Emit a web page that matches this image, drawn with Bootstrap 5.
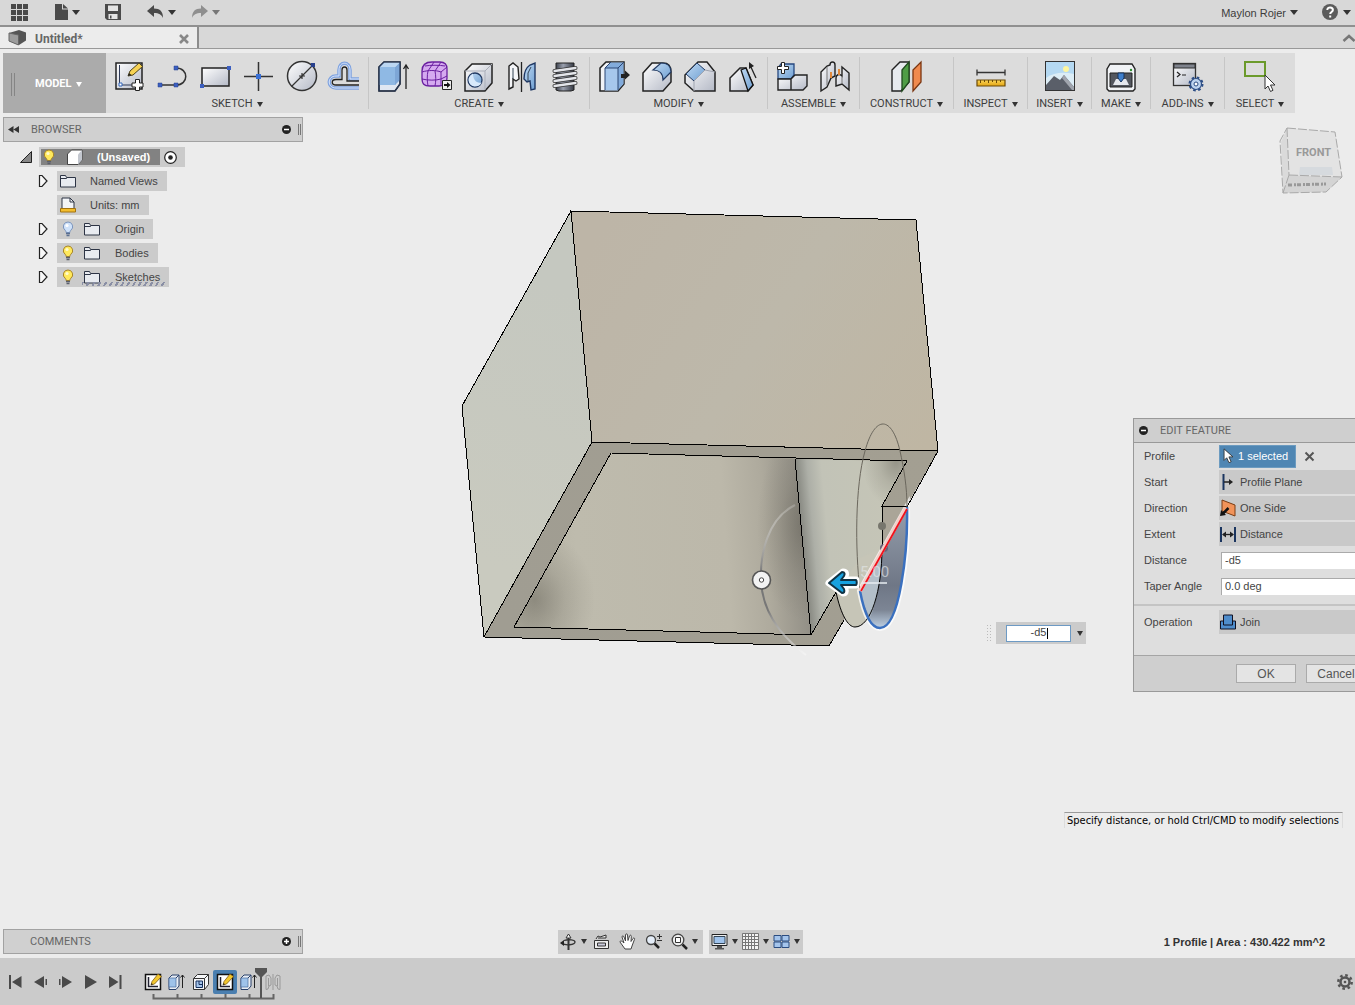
<!DOCTYPE html>
<html lang="en">
<head>
<meta charset="utf-8">
<meta name="viewport" content="width=device-width, initial-scale=1">
<title>Untitled*</title>
<link rel="stylesheet" href="https://cdn.jsdelivr.net/npm/bootstrap@5.3.0/dist/css/bootstrap.min.css">
<style>
body{background:#ececec;color:#444;font:11px/16px "Liberation Sans",Arial,sans-serif;overflow:hidden}
button,input,select{font:inherit;color:inherit;margin:0}
.ib{background:none;border:0;padding:0;display:inline-flex;align-items:center;justify-content:center;color:#3c3c3c}
svg{display:block;flex:none;overflow:visible}
.caps{font:11px/16px Roboto,"Liberation Sans",sans-serif}
.tri{width:0;height:0;border:4px solid transparent;border-top:5px solid #333;border-bottom:0;flex:none}
.tri-sm{border-width:5px 3px 0}
.tri-dim{border-top-color:#777}
.appbar{height:27px;background:#d8d8d8;border-bottom:2px solid #909090;padding-left:10px}
.appbar .gap-l{margin-left:25px}
.appbar .gap-s{margin-left:15px}
.tabs{height:22px;background:#d8d8d8;border-bottom:1px solid #999}
.doctab{width:199px;background:#ececec;border-right:2px solid #8c8c8c;padding:2px 8px 0 9px}
.doctab a{font:bold 12px/16px Roboto,"Liberation Sans",sans-serif;color:#666;margin-left:9px}
.ribbon{margin:4px 0 0 3px;height:60px;background:#dcdcdc}
.model{width:103px;background:#ababab;color:#fff;padding:2px 0 0 8px}
.model .grip{width:4px;height:23px;border:solid #858585;border-width:0 1px;margin-right:20px}
.model .tri{border-top-color:#fff}
.grp{margin:4px 0;height:52px;padding-top:2px;border-right:1px solid #c6c6c6}
.grp:last-child{border:0}
.grp .tool{width:43px;height:36px}
.grp>.ib:last-child{line-height:18px}
.w1{width:263px}.w2{width:221px}.w3{width:178px}.w4{width:92px}.w5{width:94px}.w6{width:74px}.w7{width:64px}.w8{width:59px}.w9{width:70px}
.work{min-height:0}
.scene{position:absolute;inset:0;width:100%;height:100%}
.browser{margin:4px 0 0 3px}
.bar{width:300px;height:25px;background:#d0d0d0;border:1px solid #a2a2a2;color:#666;padding:0 1px 0 4px}
.bar .endgrip{width:3px;height:11px;border:solid #777;border-width:0 1px;margin-left:7px}
.bar .solo{margin-left:22px}
.tree{margin:5px 0 0 17px;padding:0;list-style:none}
.tree li{height:20px;margin-bottom:4px;display:flex;align-items:center}
.tree .kid{padding-left:18px}
.tree .tog{width:10px;margin-right:9px}
.chip{height:20px;background:#cbcbcb;display:flex;align-items:center;padding:0 9px 0 3px;color:#444}
.chip .two{margin-left:8px}
.chip .t1{margin-left:14px}.chip .t2{margin-left:15px}
.rootchip{margin-left:7px;padding:0 8px 0 2px}
.rootsel{height:16px;background:#828282;color:#fff;font-weight:bold;padding:0 10px 0 0;display:flex;align-items:center}
.edited{position:relative}
.edited:after{content:"";position:absolute;left:25px;right:2px;bottom:1px;height:4px;background:repeating-linear-gradient(120deg,#8a8fa5 0 2px,transparent 2px 5px)}
.cube{position:absolute;right:12px;top:13px}
.dlg{position:absolute;right:0;top:305px;width:222px;background:#dedede;border:1px solid #999;border-right:0;overflow:hidden}
.dlg header{height:24px;background:#cfcfcf;border-bottom:1px solid #999;padding-left:5px;color:#666}
.frow{height:26px;display:flex;align-items:center;padding-left:10px}
.frow label,.frow .flab{width:75px;flex:none}
.pick{width:77px;height:23px;background:#4f86b3;border:1px solid #6c9bc0;color:#fff;padding:0 3px}
.selw{flex:1;height:24px;background:#c9c9c9;display:flex;align-items:center;min-width:0}
.selw select{appearance:none;background:none;border:0;padding:0 0 0 3px;flex:1;min-width:0;outline:0}
.inp{flex:1;min-width:0;height:17px;border:1px solid #aaa;border-width:1px 0 0 1px;background:#fff;padding:0 3px 2px;margin-left:2px;border-radius:0}
.rule{height:2px;background:#c4c4c4;margin:5px 0 3px}
.dlg footer{height:36px;background:#cfcfcf;border-top:1px solid #a5a5a5;margin-top:20px;padding-left:102px;display:flex;align-items:center;gap:10px}
.dlg footer button{flex:none;width:60px;height:19px;font-size:12px;line-height:16px;background:#e4e4e4;border:1px solid #aaa;padding:0;color:#555}
.hud{position:absolute;right:269px;top:509px;height:22px;background:#cbcbcb;padding:0 3px 0 10px;display:flex;align-items:center;gap:6px}
.hud .wrapin{position:relative}
.hud input{width:65px;height:17px;border:1px solid #6d9ac4;background:#fff;text-align:center;padding:0 0 2px;border-radius:0;display:block;outline:0}
.hud .cursor{position:absolute;left:41px;top:3px;width:1px;height:11px;background:#000}
.hud .dots{position:absolute;left:-10px;top:2px;width:5px;height:19px;background:radial-gradient(circle,#bbb 1px,transparent 1px) 0 0/3px 3px}
.hint{position:absolute;right:12px;top:699px;border:1px solid #dcdcdc;border-top-color:#999;border-bottom:0;padding:0 3px 0 2px;color:#000;font:11px/15px "DejaVu Sans Condensed","Open Sans",sans-serif;white-space:nowrap}
.foot{display:grid;grid-template-columns:1fr auto 1fr;padding:0 0 4px 3px;align-items:center}
.foot .views{margin-left:2px;gap:6px}
.navb{height:24px;background:#cbcbcb;display:flex;align-items:center}
.nav1{width:145px}.nav2{width:94px}
.navb .ib{height:24px;width:26px;flex:none}
.navb .dd{width:31px}
.navb .ddw{width:36px}
.status{font-weight:bold;color:#333;padding-right:30px;text-align:right}
.timeline{height:47px;background:#cbcbcb;padding-left:3px}
.timeline .play{width:25px;height:47px}
.feats{margin-left:13px;height:47px;position:relative;padding-top:12px}
.feats .ib{width:24px;height:24px}
.feats .on{background:#4a7fb0;border-radius:2px}
.feats .marks{position:absolute;left:0;top:0}
.gear{margin-right:2px}
</style>
<script src="https://cdn.jsdelivr.net/npm/bootstrap@5.3.0/dist/js/bootstrap.bundle.min.js"></script>
</head>
<body class="vh-100 d-flex flex-column">

<svg width="0" height="0" class="position-absolute" aria-hidden="true">
<defs>
<linearGradient id="gw" x1="0" y1="0" x2="1" y2="1"><stop offset="0" stop-color="#fff"/><stop offset="1" stop-color="#b4b9c6"/></linearGradient>
<linearGradient id="gb" x1="0" y1="0" x2="1" y2="1"><stop offset="0" stop-color="#c0daf3"/><stop offset="1" stop-color="#6f9fd2"/></linearGradient>
<linearGradient id="gs" x1="0" y1="0" x2="1" y2="0"><stop offset="0" stop-color="#3c414c"/><stop offset=".4" stop-color="#9aa0ae"/><stop offset="1" stop-color="#343843"/></linearGradient>
<linearGradient id="gy" x1="0" y1="0" x2="0" y2="1"><stop offset="0" stop-color="#fbd65a"/><stop offset="1" stop-color="#e3a412"/></linearGradient>
<symbol id="bulb" viewBox="0 0 16 16"><path d="M8 1a4.600 4.600 0 0 0-2.800 8.300c.6.6.9 1.300.9 2.200h3.800c0-.9.3-1.600.9-2.200A4.600 4.600 0 0 0 8 1z" fill="#ffe95c" stroke="#a8852a"/><circle cx="7" cy="4.500" r="1.600" fill="#fffbd0"/><path d="M6 12.500h4M6.500 14.500h3" stroke="#5b5f6c" stroke-width="1.500"/></symbol>
<symbol id="bulboff" viewBox="0 0 16 16"><path d="M8 1a4.600 4.600 0 0 0-2.800 8.300c.6.6.9 1.300.9 2.200h3.800c0-.9.3-1.600.9-2.200A4.600 4.600 0 0 0 8 1z" fill="#cfe2fa" stroke="#7c95bd"/><circle cx="7" cy="4.500" r="1.600" fill="#fff"/><path d="M6 12.500h4M6.500 14.500h3" stroke="#5b6f90" stroke-width="1.500"/></symbol>
<symbol id="folder" viewBox="0 0 16 16"><path d="M.5 2.500h5l1 2h9v9.500H.5z" fill="#e8ebf0" stroke="#2d3445"/><path d="M1 5.500h5.500l1-1" fill="none" stroke="#2d3445"/></symbol>
<symbol id="togr" viewBox="0 0 10 14"><path d="M1.500 1.500H4L9 7l-5 5.500H1.500z" fill="#f8f8f8" stroke="#222" stroke-width="1.200"/></symbol>
<symbol id="sk" viewBox="0 0 18 18"><path d="M1.500 1.500h15v15h-15z" fill="#fff" stroke="#111" stroke-width="1.500"/><path d="M4.500 4v9.500H14" fill="none" stroke="#223" stroke-width="1.500"/><path d="M7 12l1-3.500L14 1l3.500 2.500-7 7.500z" fill="#f2c62e" stroke="#7d5a13" stroke-width=".8"/><path d="M7 12l.6-2 1.400 1.200z" fill="#222"/></symbol>
<symbol id="ex" viewBox="0 0 18 18"><path d="M1 5l3-3h7v11l-3 3.500H1z" fill="#e9eef5" stroke="#28406b"/><path d="M1 5h7v9H1z" fill="#9fc3ea" stroke="#4a6a9b" stroke-width=".7"/><path d="M8 5l3-3" stroke="#28406b"/><path d="M14.500 15V2M12.500 4.500l2-2.500 2 2.500" fill="none" stroke="#222"/></symbol>
<symbol id="cur" viewBox="0 0 12 18"><path d="M1 1v13l3-3 2.500 5.500 2.500-1L6.500 10H11z" fill="#fff" stroke="#333"/></symbol>
</defs></svg>

<header class="appbar d-flex align-items-center flex-shrink-0">
  <button class="ib" aria-label="Data panel"><svg width="18" height="18" viewBox="0 0 18 18" fill="#4a4a4a"><path d="M1 0h5v5H1zM7 0h5v5H7zM13 0h5v5h-5zM1 6h5v5H1zM7 6h5v5H7zM13 6h5v5h-5zM1 12h5v5H1zM7 12h5v5H7zM13 12h5v5h-5z"/></svg></button>
  <button class="ib gap-l" aria-label="File"><svg width="15" height="18" viewBox="0 0 15 18"><path d="M2 0h7v5.500h6V16H2z" fill="#4a4a4a"/><path d="M10 0l5 4.500h-5z" fill="#4a4a4a"/></svg><span class="tri ms-1"></span></button>
  <button class="ib gap-l" aria-label="Save"><svg width="17" height="17" viewBox="0 0 17 17"><path d="M0 0h16v16H2l-2-2z" fill="#4a4a4a"/><path d="M3 1.500h10V7H3zM3.500 10h9v5h-9z" fill="#e3e3e3"/><path d="M5 11.500h1.500v3H5z" fill="#4a4a4a"/></svg></button>
  <button class="ib gap-l" aria-label="Undo"><svg width="17" height="16" viewBox="0 0 17 16"><path d="M0 6l7-6v3.500c6 0 9 3 9 9.500-1.500-3.500-4-5-9-5V12z" fill="#4a4a4a"/></svg><span class="tri ms-1"></span></button>
  <button class="ib gap-s" aria-label="Redo"><svg width="17" height="16" viewBox="0 0 17 16"><path d="M17 6l-7-6v3.500c-6 0-9 3-9 9.500 1.500-3.500 4-5 9-5V12z" fill="#8f8f8f"/></svg><span class="tri tri-dim ms-1"></span></button>
  <button class="ib ms-auto">Maylon Rojer<span class="tri ms-1"></span></button>
  <button class="ib ms-4 me-1" aria-label="Help"><svg width="17" height="17" viewBox="0 0 17 17"><circle cx="8" cy="8" r="8" fill="#5c5c5c"/><path d="M5.300 6c0-3.500 5.600-3.300 5.600 0 0 2-2.700 2-2.700 4M8.200 11.500v2" fill="none" stroke="#fff" stroke-width="2"/></svg><span class="tri ms-1"></span></button>
</header>

<nav class="tabs d-flex flex-shrink-0">
  <div class="doctab d-flex align-items-center">
    <svg width="17" height="16" viewBox="0 0 17 16"><path d="M0 2l10-3 7 2.500v8L10 14 0 10z" fill="#555"/><path d="M0 2l9.500 2v10L0 10z" fill="#9c9c9c" stroke="#666"/></svg>
    <a href="#" class="text-decoration-none">Untitled*</a>
    <button class="ib ms-auto" aria-label="Close"><svg width="10" height="10" viewBox="0 0 10 10"><path d="M1 1l8 8M9 1L1 9" stroke="#888" stroke-width="2.600"/></svg></button>
  </div>
  <button class="ib ms-auto" aria-label="Collapse"><svg width="13" height="8" viewBox="0 0 13 8"><path d="M1.500 7L7 2l5.500 5" fill="none" stroke="#777" stroke-width="2.500"/></svg></button>
</nav>

<div class="d-flex flex-shrink-0">
<div class="ribbon d-flex caps">
  <button class="ib model caps fw-bold text-white justify-content-start"><span class="grip"></span>MODEL<span class="tri ms-1 tri-sm"></span></button>

  <div class="grp w1 d-flex flex-column align-items-center">
    <div class="d-flex">
      <button class="ib tool" aria-label="Create sketch"><svg width="36" height="36" viewBox="0 0 36 36"><rect x="4" y="4" width="26" height="26" fill="url(#gw)" stroke="#222" stroke-width="1.500"/><path d="M7.500 6v20H27" fill="none" stroke="#2f3a58"/><path d="M7 24h3v3H7z" fill="#fff" stroke="#3366bb"/><path d="M16 17l2-5L27 4l3.500 3.500L21 16z" fill="#f6d254" stroke="#4e431c"/><path d="M16 17l1-3 2.500 2z" fill="#222"/><path d="M23.500 20.500h4V24H31v4h-3.500v3.500h-4V28H20v-4h3.500z" fill="#fff" stroke="#222"/></svg></button>
      <button class="ib tool" aria-label="Line"><svg width="36" height="36" viewBox="0 0 36 36"><path d="M5 26h16c13 0 13-17 0-17" fill="none" stroke="#333" stroke-width="1.500"/><path d="M3 24h4v4H3zM19 24h4v4h-4zM19 7h4v4h-4z" fill="#3c5fc0" stroke="#27408d" stroke-width=".5"/></svg></button>
      <button class="ib tool" aria-label="Rectangle"><svg width="36" height="36" viewBox="0 0 36 36"><rect x="4" y="9" width="27" height="18" fill="url(#gw)" stroke="#222" stroke-width="1.500"/><path d="M2 25h4v4H2zM29 7h4v4h-4z" fill="#3c5fc0"/></svg></button>
      <button class="ib tool" aria-label="Point"><svg width="36" height="36" viewBox="0 0 36 36"><path d="M17.500 3v29M3 17.500h29" stroke="#333" stroke-width="1.500"/><path d="M15 15h5v5h-5z" fill="#3970d6"/></svg></button>
      <button class="ib tool" aria-label="Circle"><svg width="36" height="36" viewBox="0 0 36 36"><circle cx="18" cy="17" r="14.500" fill="url(#gw)" stroke="#333" stroke-width="1.500"/><path d="M7.500 27.500L29 6M15 17h6M18 14v6" stroke="#333" stroke-width="1.200"/><path d="M27 4h4v4h-4z" fill="#27408d"/></svg></button>
      <button class="ib tool" aria-label="Offset"><svg width="36" height="36" viewBox="0 0 36 36" fill="none"><path d="M32 20H23V11c0-9-11-9-11 0v6H9c-9 0-9 12 0 12h23" stroke="#7fa3e0" stroke-width="3.500"/><path d="M32 20H23V11c0-9-11-9-11 0v6H9c-9 0-9 12 0 12h23" stroke="#dbe6fa"/><path d="M32 22H20V11c0-4-5-4-5 0v9.500H9c-5 0-5 5.500 0 5.500h23" stroke="#222" stroke-width="1.300"/></svg></button>
    </div>
    <button class="ib">SKETCH<span class="tri ms-1 tri-sm"></span></button>
  </div>

  <div class="grp w2 d-flex flex-column align-items-center">
    <div class="d-flex">
      <button class="ib tool" aria-label="Extrude"><svg width="36" height="36" viewBox="0 0 36 36"><path d="M4 8l5-5h16v22l-5 7H4z" fill="#dfe7f2" stroke="#222" stroke-width="1.500"/><path d="M4.500 8h16v18h-16z" fill="#8fb9e4"/><path d="M20 8l5-5v18l-5 5z" fill="#7da6d6"/><path d="M4.500 8L9 3.500h15.500L20 8z" fill="#bcd7f2"/><path d="M4 8l5-5h16v22l-5 7H4z" fill="none" stroke="#26395c" stroke-width="1.200"/><path d="M31 30V7M28.500 10L31 6l2.500 4" fill="none" stroke="#222" stroke-width="1.300"/></svg></button>
      <button class="ib tool" aria-label="Form"><svg width="36" height="36" viewBox="0 0 36 36"><path d="M4 12c0-6 4-9 10-9h8c5 0 7 3 7 7v9c0 5-3 8-8 8h-9c-6 0-8-2-8-8z" fill="#d5aaf0" stroke="#6a1fa0" stroke-width="1.300"/><path d="M4 13c6-2 14-2 19 0l6-5M4 20c6 1.500 14 1.500 19 0l6-3M10 27c-1-5-1-11 0-15l6-9M17 27c1-5 1-10 0-15l6-9M23 27V13M7 7c5-1 15-1 20 0" fill="none" stroke="#6a1fa0"/><path d="M24.500 21.500h9v9h-9z" fill="#eee" stroke="#222"/><path d="M26 25h3v-2l3.500 3-3.500 3v-2h-3z" fill="#111"/></svg></button>
      <button class="ib tool" aria-label="Hole"><svg width="36" height="36" viewBox="0 0 36 36"><path d="M4 12l7-7h20v19l-7 8H4z" fill="url(#gw)" stroke="#222" stroke-width="1.500"/><path d="M4 12h20v19M24 12l7-7" fill="none" stroke="#aaaeb9"/><circle cx="14" cy="21" r="7" fill="url(#gb)" stroke="#223a63" stroke-width="1.300"/><path d="M12 14.500c0 6 3 10 8.500 9-1 3-4 4-7 4-7-1-8-10-1.500-13z" fill="#d8e9fb"/></svg></button>
      <button class="ib tool" aria-label="Mirror"><svg width="36" height="36" viewBox="0 0 36 36"><path d="M5 7l4-3 5 4 1 12-3 2-3-2v8l-4 2z" fill="#f4f5f8" stroke="#222" stroke-width="1.400"/><path d="M31 4v26l-4 1-1-9-3 1-3-3c0-8 3-12 6-14z" fill="url(#gb)" stroke="#1e3763" stroke-width="1.400"/><path d="M17.500 3v30" stroke="#222" stroke-width="1.300"/><path d="M9 9v11M27 8l-3 6v8" fill="none" stroke="#345"/></svg></button>
      <button class="ib tool" aria-label="Thread"><svg width="36" height="36" viewBox="0 0 36 36"><path d="M9 4h18v27l-3 1H12l-3-1z" fill="url(#gs)" stroke="#222"/><g fill="none" stroke="#333" stroke-width="4" stroke-linecap="round"><path d="M7.500 12l21-3M7.500 17l21-3M7.500 22l21-3M7.500 27l21-3"/></g><g fill="none" stroke="#e3e5ea" stroke-width="2.300" stroke-linecap="round"><path d="M7.500 12l21-3M7.500 17l21-3M7.500 22l21-3M7.500 27l21-3"/></g></svg></button>
    </div>
    <button class="ib">CREATE<span class="tri ms-1 tri-sm"></span></button>
  </div>

  <div class="grp w3 d-flex flex-column align-items-center">
    <div class="d-flex">
      <button class="ib tool" aria-label="Press pull"><svg width="36" height="36" viewBox="0 0 36 36"><path d="M4 9l6-6h18v22l-6 7H4z" fill="#f1f3f7" stroke="#222" stroke-width="1.500"/><path d="M9 9h13v22.500H9z" fill="#a6c7ec"/><path d="M9 9l6-5.500h12.500L22 9zM22 9l5.500-5.500V25L22 31z" fill="#82abdb"/><path d="M9 31V9l6-6M9 9h13v22M22 9l6-6" fill="none" stroke="#2b4775"/><path d="M25 15h4v-3.500l5 4.500-5 4.500V19h-4z" fill="#222"/></svg></button>
      <button class="ib tool" aria-label="Fillet"><svg width="36" height="36" viewBox="0 0 36 36"><path d="M4 14l9-10h11c6 0 8 4 8 9v10l-8 9H4z" fill="url(#gw)" stroke="#222" stroke-width="1.500"/><path d="M14 11l8-7c7 0 10 4 10 9l-8 8c0-7-4-10-10-10z" fill="url(#gb)" stroke="#223a63" stroke-width="1.200"/></svg></button>
      <button class="ib tool" aria-label="Chamfer"><svg width="36" height="36" viewBox="0 0 36 36"><path d="M3 16L16 3h9l8 10v19H12l-9-8z" fill="url(#gw)" stroke="#222" stroke-width="1.500"/><path d="M4 15L15 4l8 7-11 11z" fill="url(#gb)" stroke="#223a63"/><path d="M12 22v10M12 22l11-11 10 2" fill="none" stroke="#a0a4af"/></svg></button>
      <button class="ib tool" aria-label="Draft"><svg width="36" height="36" viewBox="0 0 36 36"><path d="M5 32V19L15 9h6l7 17-5 6z" fill="url(#gw)" stroke="#222" stroke-width="1.500"/><path d="M16 11l5-2 7 17-5 6z" fill="url(#gb)" stroke="#111" stroke-width="1.300"/><path d="M31 19L25 6" stroke="#222" stroke-width="1.300"/><path d="M24 3l5 4-5 3z" fill="#222"/></svg></button>
    </div>
    <button class="ib">MODIFY<span class="tri ms-1 tri-sm"></span></button>
  </div>

  <div class="grp w4 d-flex flex-column align-items-center">
    <div class="d-flex">
      <button class="ib tool" aria-label="New component"><svg width="36" height="36" viewBox="0 0 36 36"><path d="M4 9l3-4h13v11l-3 4H4z" fill="url(#gb)" stroke="#26477f" stroke-width="1.300"/><path d="M4 20h13v11H4zM17 20l4-4h12v11l-4 4H17z" fill="url(#gw)" stroke="#222" stroke-width="1.400"/><path d="M7.500 3.500h3v4h4v3h-4v4h-3v-4h-4v-3h4z" fill="#fff" stroke="#222"/></svg></button>
      <button class="ib tool" aria-label="Joint"><svg width="36" height="36" viewBox="0 0 36 36"><path d="M4 13l6-6 3-1c0-4 5-4 5 0v11l-4 2-4 9-6 4z" fill="url(#gw)" stroke="#222" stroke-width="1.400"/><path d="M32 31V14l-7-6v9c-3-3-6-1-6 2v8l6-2z" fill="url(#gw)" stroke="#222" stroke-width="1.400"/><path d="M10 8v18M25 17v8" stroke="#777"/><path d="M14 13v6M22 10v6" stroke="#e28a3c" stroke-width="2"/></svg></button>
    </div>
    <button class="ib">ASSEMBLE<span class="tri ms-1 tri-sm"></span></button>
  </div>
  <div class="grp w5 d-flex flex-column align-items-center">
    <button class="ib tool" aria-label="Offset plane"><svg width="36" height="36" viewBox="0 0 36 36"><path d="M3 11l8-8h9v20l-8 9H3z" fill="#e7eaee" stroke="#222" stroke-width="1.400"/><path d="M13 11l7-8v20l-7 9z" fill="#4f9d45" stroke="#1f4a1d" stroke-width="1.300"/><path d="M24 11l8-8v20l-8 9z" fill="#f08a4e" stroke="#7a3510" stroke-width="1.300"/></svg></button>
    <button class="ib">CONSTRUCT<span class="tri ms-1 tri-sm"></span></button>
  </div>
  <div class="grp w6 d-flex flex-column align-items-center">
    <button class="ib tool" aria-label="Measure"><svg width="36" height="36" viewBox="0 0 36 36"><path d="M4 13.500h28M4 10.500v6M32 10.500v6" stroke="#333" stroke-width="1.300"/><path d="M4 21h28v6H4z" fill="url(#gy)" stroke="#6b4a08" stroke-width="1.200"/><path d="M7.500 21v3M11.500 21v2M15.500 21v3M19.500 21v2M23.500 21v3M27.500 21v2" stroke="#6b4a08"/></svg></button>
    <button class="ib">INSPECT<span class="tri ms-1 tri-sm"></span></button>
  </div>
  <div class="grp w7 d-flex flex-column align-items-center">
    <button class="ib tool" aria-label="Insert image"><svg width="36" height="36" viewBox="0 0 36 36"><rect x="3.500" y="2.500" width="29" height="29" fill="#b5d9f2" stroke="#333"/><path d="M4 19c8-6 18-6 28-4v16H4z" fill="#dcedf6"/><circle cx="24" cy="10" r="3" fill="#fdf6a0"/><path d="M4 26l8-9 6 4 4-5 10 12v3H4z" fill="#5a5f69"/><path d="M22 16l10 12v3h-2L20 19z" fill="#a0a5ae"/></svg></button>
    <button class="ib">INSERT<span class="tri ms-1 tri-sm"></span></button>
  </div>
  <div class="grp w8 d-flex flex-column align-items-center">
    <button class="ib tool" aria-label="3D print"><svg width="36" height="36" viewBox="0 0 36 36"><path d="M4 10l3-5h22l3 5v20l-2 2H6l-2-2z" fill="#f1f3f6" stroke="#222" stroke-width="1.400"/><path d="M7 14h22v14H7z" fill="#53575f" stroke="#222"/><path d="M10 26l3-6h10l3 6z" fill="#e5e8ee"/><path d="M15 14h6v5l-3 4-3-4z" fill="#3f7fcc" stroke="#16345f"/><circle cx="28" cy="11" r="1.200" fill="#2d8c2d"/></svg></button>
    <button class="ib">MAKE<span class="tri ms-1 tri-sm"></span></button>
  </div>
  <div class="grp w6 d-flex flex-column align-items-center">
    <button class="ib tool" aria-label="Scripts"><svg width="36" height="36" viewBox="0 0 36 36"><rect x="3.500" y="4.500" width="22" height="22" fill="url(#gw)" stroke="#333" stroke-width="1.300"/><path d="M4 5h21v4H4z" fill="#7f838d" stroke="#333"/><path d="M7 13l3 2.500L7 18M12 16h4" fill="none" stroke="#222" stroke-width="1.200"/><circle cx="26" cy="25" r="5.500" fill="#bdd3ef" stroke="#2c4d85" stroke-width="1.200"/><circle cx="26" cy="25" r="6.500" fill="none" stroke="#2c4d85" stroke-width="2" stroke-dasharray="2.600 2.500"/><circle cx="26" cy="25" r="2" fill="#fff" stroke="#2c4d85"/></svg></button>
    <button class="ib">ADD-INS<span class="tri ms-1 tri-sm"></span></button>
  </div>
  <div class="grp w9 d-flex flex-column align-items-center">
    <button class="ib tool" aria-label="Select"><svg width="36" height="36" viewBox="0 0 36 36"><path d="M3 3h20v14H3z" fill="none" stroke="#6b9a2b" stroke-width="2"/><path d="M23 16v14l3-3 2.500 5.500 2.500-1.200L28.500 26H33z" fill="#fff" stroke="#333"/></svg></button>
    <button class="ib">SELECT<span class="tri ms-1 tri-sm"></span></button>
  </div>
</div>
</div>

<main class="work position-relative flex-grow-1 d-flex flex-column">
  <svg class="scene" viewBox="0 113 1355 845" role="img" aria-label="Model">
    <defs>
      <linearGradient id="mTop" gradientUnits="userSpaceOnUse" x1="600" y1="230" x2="930" y2="440"><stop offset="0" stop-color="#bdb5a7"/><stop offset=".5" stop-color="#bdb8aa"/><stop offset="1" stop-color="#bfb6a3"/></linearGradient>
      <linearGradient id="mSide" gradientUnits="userSpaceOnUse" x1="480" y1="560" x2="590" y2="300"><stop offset="0" stop-color="#c9cabf"/><stop offset="1" stop-color="#c5c8c0"/></linearGradient>
      <linearGradient id="mIn" gradientUnits="userSpaceOnUse" x1="520" y1="560" x2="806" y2="540"><stop offset="0" stop-color="#b5b2a4"/><stop offset=".2" stop-color="#bebbad"/><stop offset=".72" stop-color="#bcb8aa"/><stop offset=".86" stop-color="#aeaa9d"/><stop offset="1" stop-color="#918e85"/></linearGradient>
      <linearGradient id="mWall" gradientUnits="userSpaceOnUse" x1="802" y1="545" x2="890" y2="537"><stop offset="0" stop-color="#85867f"/><stop offset=".14" stop-color="#adafa7"/><stop offset=".3" stop-color="#c2c3b7"/><stop offset="1" stop-color="#c5c5b7"/></linearGradient>
      <linearGradient id="mRim" gradientUnits="userSpaceOnUse" x1="500" y1="600" x2="930" y2="450"><stop offset="0" stop-color="#a09d92"/><stop offset="1" stop-color="#a39f92"/></linearGradient>
      <linearGradient id="mPro" x1="0" y1="0" x2="0" y2="1"><stop offset="0" stop-color="#959eac"/><stop offset=".65" stop-color="#6f7786"/><stop offset=".85" stop-color="#7c8594"/><stop offset="1" stop-color="#bfd1e4"/></linearGradient>
      <linearGradient id="mArc" x1="0" y1="0" x2="0" y2="1"><stop offset="0" stop-color="#fff" stop-opacity=".2"/><stop offset=".45" stop-color="#777"/><stop offset=".7" stop-color="#777"/><stop offset="1" stop-color="#fff" stop-opacity=".4"/></linearGradient>
      <radialGradient id="mSh"><stop offset="0" stop-color="#555249" stop-opacity=".42"/><stop offset=".5" stop-color="#555249" stop-opacity=".16"/><stop offset="1" stop-color="#555249" stop-opacity="0"/></radialGradient>
      <clipPath id="cIn"><path d="M611 453l184 6 16 176-297-8z"/></clipPath>
      <clipPath id="cWall"><path d="M795 459l112 2-25 45v60l-46 28-25 41z"/></clipPath>
    </defs>
    <path d="M571 211l21 231-108 195-22-231z" fill="url(#mSide)"/>
    <path d="M571 211l345 9 22 231-346-9z" fill="url(#mTop)"/>
    <path d="M592 442l346 9-32 56-24 40-38 73-15 26-345-9z" fill="url(#mRim)"/>
    <path d="M611 453l184 6 16 176-297-8z" fill="url(#mIn)"/>
    <g clip-path="url(#cIn)"><ellipse cx="535" cy="600" rx="60" ry="70" fill="url(#mSh)"/><ellipse cx="802" cy="525" rx="45" ry="95" fill="url(#mSh)"/></g>
    <path d="M795 459l112 2-25 45v50l-46 38-25 41z" fill="url(#mWall)"/>
    <g clip-path="url(#cWall)"><ellipse cx="896" cy="462" rx="34" ry="46" fill="url(#mSh)"/></g>
    <path d="M882 506h25l-25 44z" fill="#aaa598"/>
    <path d="M836 592C841 615 848 627 855 627c16 0 27-37 27-79l-22 10z" fill="#c6c5b7"/>
    <path d="M907 507c1 43-7 121-27 121-10 0-16-16-20-37z" fill="#fff" stroke="#fff" stroke-width="6" stroke-opacity=".75"/>
    <path d="M907 507c1 43-7 121-27 121-10 0-16-16-20-37z" fill="url(#mPro)"/>
    <path d="M882 552c-1 25-5 50-12 65-5-8-8-16-10-26z" fill="#b3bfc9"/>
    <g fill="none" stroke="#000" shape-rendering="crispEdges">
      <path d="M571 211l345 9 22 231-346-9zM571 211L462 406l22 231 108-195M484 637l345 9 15-26M938 451l-31 56"/>
      <path d="M907 461l-296-8-97 174 297 8-16-176M907 461l-25 45h25M882 506v42M811 635l25-43"/>
    </g>
    <path d="M836 592C841 615 848 627 855 627c16 0 27-37 27-79" fill="none" stroke="#000"/>
    <path d="M860 591c-5-42-5-105 5-140 10-37 27-35 35 0 4 18 7 36 7 56" fill="none" stroke="#6b675d"/>
    <circle cx="882" cy="526" r="4" fill="#77766d"/><circle cx="884" cy="548" r="4" fill="#686379"/>
    <path d="M907 507c1 43-7 121-27 121-10 0-16-16-20-37" fill="none" stroke="#3a70bf" stroke-width="2.500"/>
    <path d="M906 508l-46 83" stroke="#f4cfc8" stroke-width="4"/><path d="M907 509l-46 82" stroke="#f0121c" stroke-width="1.800"/>
    <text x="860" y="577" font-family="Roboto,sans-serif" font-size="15" fill="#e4e8ea" fill-opacity=".65">5.00</text>
    <path d="M862 583h25" stroke="#e8eef2" stroke-width="1.500"/>
    <path d="M829 583l14-11c3 0 3 2 2 4l-2 4h13v5h-13l2 4c1 3 0 4-2 4z" fill="#fff" stroke="#fff" stroke-width="7" stroke-linejoin="round"/>
    <path d="M829 583l13-11c3 0 3 2 2 4l-3 4h15c1 1 1 4 0 5h-15l3 4c1 3 0 4-2 4z" fill="#17a2e0" stroke="#113344" stroke-width="2" stroke-linejoin="round"/>
    <path d="M795 505c-28 14-35 50-34 75 1 30 17 54 45 75" fill="none" stroke="url(#mArc)" stroke-width="2"/>
    <circle cx="761.500" cy="580" r="9" fill="#f2f2f2" stroke="#555" stroke-width="1.600"/><circle cx="761.500" cy="580" r="2.200" fill="#fff" stroke="#444"/>
  </svg>

  <svg class="cube" width="64" height="70" viewBox="1279 126 64 70"><path d="M1287 128l-6 14 2 51 6-18z" fill="#dadada"/><path d="M1287 128l48 4 7 45-53-2z" fill="#e3e3e3"/><path d="M1289 175l53 2-16 15-43 1z" fill="#d4d4d4"/><path d="M1300 167h32l1 8h-34z" fill="#d6dade"/><path d="M1287 128l48 4 7 45-16 15-43 1-3-52zM1287 128l2 47M1289 175l53 2M1289 175l-6 18" fill="none" stroke="#a9a9a9" stroke-dasharray="9 2"/><path d="M1288 185l38-1" stroke="#999" stroke-width="3" stroke-dasharray="4 2 2 1"/><text x="1296" y="156" font-family="Roboto,sans-serif" font-size="11" font-weight="bold" fill="#999">FRONT</text></svg>

  <section class="position-relative browser">
    <div class="bar caps d-flex align-items-center"><svg width="11" height="7" viewBox="0 0 11 7"><path d="M5.500 0v7L0 3.500zM11 0v7L5.500 3.500z" fill="#333"/></svg><span class="ms-2 ps-1">BROWSER</span><button class="ib ms-auto" aria-label="Minimise"><svg width="9" height="9" viewBox="0 0 9 9"><circle cx="4.500" cy="4.500" r="4.500" fill="#222"/><path d="M2 4.500h5" stroke="#fff" stroke-width="1.500"/></svg></button><span class="endgrip"></span></div>
    <ul class="tree">
      <li><button class="ib" aria-label="Collapse root"><svg width="12" height="12" viewBox="0 0 12 12"><path d="M11.500.5v11H.5z" fill="#888" stroke="#222"/></svg></button><span class="chip rootchip"><span class="rootsel"><svg width="16" height="16"><use href="#bulb"/></svg><svg class="two" width="18" height="16" viewBox="0 0 18 16"><path d="M2.500 5l4-4H17v10l-4 4.500H2.500z" fill="#fff" stroke="#444"/><path d="M13 5.500L17 1v10l-4 4.500z" fill="#c3c7cf"/></svg><span class="t1">(Unsaved)</span></span><svg class="ms-1" width="13" height="13" viewBox="0 0 13 13"><circle cx="6.500" cy="6.500" r="5.800" fill="#fff" stroke="#222" stroke-width="1.200"/><circle cx="6.500" cy="6.500" r="2.300" fill="#222"/></svg></span></li>
      <li class="kid"><button class="ib tog" aria-label="Expand Named Views"><svg width="10" height="14"><use href="#togr"/></svg></button><span class="chip"><svg width="16" height="16"><use href="#folder"/></svg><span class="t1">Named Views</span></span></li>
      <li class="kid"><span class="tog"></span><span class="chip"><svg width="16" height="16" viewBox="0 0 16 16"><path d="M2 1h8l4 4v8H2z" fill="#f3f5f8" stroke="#2d3445"/><path d="M10 1v4h4" fill="none" stroke="#2d3445"/><path d="M.5 11.500h15v3.500H.5z" fill="#f3bd2e" stroke="#a3730f"/></svg><span class="t1">Units: mm</span></span></li>
      <li class="kid"><button class="ib tog" aria-label="Expand Origin"><svg width="10" height="14"><use href="#togr"/></svg></button><span class="chip"><svg width="16" height="16"><use href="#bulboff"/></svg><svg class="two" width="16" height="16"><use href="#folder"/></svg><span class="t2">Origin</span></span></li>
      <li class="kid"><button class="ib tog" aria-label="Expand Bodies"><svg width="10" height="14"><use href="#togr"/></svg></button><span class="chip"><svg width="16" height="16"><use href="#bulb"/></svg><svg class="two" width="16" height="16"><use href="#folder"/></svg><span class="t2">Bodies</span></span></li>
      <li class="kid"><button class="ib tog" aria-label="Expand Sketches"><svg width="10" height="14"><use href="#togr"/></svg></button><span class="chip edited"><svg width="16" height="16"><use href="#bulb"/></svg><svg class="two" width="16" height="16"><use href="#folder"/></svg><span class="t2">Sketches</span></span></li>
    </ul>
  </section>

  <form class="dlg">
    <header class="caps d-flex align-items-center"><svg width="9" height="9" viewBox="0 0 9 9"><circle cx="4.500" cy="4.500" r="4.500" fill="#222"/><path d="M2 4.500h5" stroke="#fff" stroke-width="1.500"/></svg><span class="ms-2 ps-1">EDIT FEATURE</span></header>
    <div class="frow"><span class="flab">Profile</span><button type="button" class="ib pick text-white justify-content-start"><svg width="11" height="16" class="me-1"><use href="#cur"/></svg>1 selected</button><button type="button" class="ib ms-2" aria-label="Clear"><svg width="11" height="9" viewBox="0 0 11 9"><path d="M1.500.5l8 8M9.500.5l-8 8" stroke="#555" stroke-width="2"/></svg></button></div>
    <div class="frow"><label for="fs">Start</label><span class="selw"><svg width="18" height="18" viewBox="0 0 18 18"><path d="M4.500 1v16" stroke="#1b355f" stroke-width="2"/><path d="M5 9h7" stroke="#222" stroke-width="1.500"/><path d="M10 6l4 3-4 3z" fill="#222"/></svg><select id="fs"><option>Profile Plane</option></select></span></div>
    <div class="frow"><label for="fd">Direction</label><span class="selw"><svg width="18" height="18" viewBox="0 0 18 18"><path d="M3 1l13 5v11L3 12z" fill="#f1935a" stroke="#7a3c14"/><path d="M9.500 9L4 14.500" stroke="#111" stroke-width="2.500"/><path d="M1 17l1-6 5 5z" fill="#111"/></svg><select id="fd"><option>One Side</option></select></span></div>
    <div class="frow"><label for="fe">Extent</label><span class="selw"><svg width="18" height="18" viewBox="0 0 18 18"><path d="M2 2v15M16 2v15" stroke="#1b355f" stroke-width="2"/><path d="M4 9.500h10" stroke="#222" stroke-width="1.300"/><path d="M7 6.500l-4 3 4 3zM11 6.500l4 3-4 3z" fill="#222"/></svg><select id="fe"><option>Distance</option></select></span></div>
    <div class="frow"><label for="fx">Distance</label><input class="inp" id="fx" value="-d5"></div>
    <div class="frow"><label for="ft">Taper Angle</label><input class="inp" id="ft" value="0.0 deg"></div>
    <div class="rule"></div>
    <div class="frow"><label for="fo">Operation</label><span class="selw"><svg width="18" height="18" viewBox="0 0 18 18"><path d="M1.500 8h3V2h9v6h3v8h-15z" fill="#4f8dcc" stroke="#112"/><path d="M4.500 8v4h9V8" fill="none" stroke="#112"/></svg><select id="fo"><option>Join</option></select></span></div>
    <footer><button type="button">OK</button><button type="button">Cancel</button></footer>
  </form>

  <div class="hud"><span class="dots"></span><span class="wrapin"><input aria-label="Distance" value="-d5"><span class="cursor"></span></span><button class="ib" aria-label="Distance options"><span class="tri tri-sm"></span></button></div>
  <div class="hint">Specify distance, or hold Ctrl/CMD to modify selections</div>

  <div class="foot mt-auto position-relative">
    <div class="bar caps d-flex align-items-center"><span class="solo">COMMENTS</span><button class="ib ms-auto" aria-label="Expand comments"><svg width="9" height="9" viewBox="0 0 9 9"><circle cx="4.500" cy="4.500" r="4.500" fill="#222"/><path d="M2 4.500h5M4.500 2v5" stroke="#fff" stroke-width="1.500"/></svg></button><span class="endgrip"></span></div>
    <div class="views d-flex">
      <div class="navb nav1">
        <button class="ib dd" aria-label="Orbit"><svg width="17" height="17" viewBox="0 0 17 17" fill="none"><path d="M8.500 17V4" stroke="#333" stroke-width="2"/><path d="M6 5l2.500-4L11 5z" fill="#fff" stroke="#333"/><path d="M2 10c3 3 13 2 13-1 0-2-6-3-11-1.500" stroke="#333" stroke-width="1.300"/><path d="M0 10l4-3v6z" fill="#222"/></svg><span class="tri tri-sm ms-1"></span></button>
        <button class="ib" aria-label="Look at"><svg width="17" height="17" viewBox="0 0 17 17"><path d="M1.500 7.500h14v8h-14z" fill="#eee" stroke="#333"/><path d="M4.500 10h8v3h-8z" fill="#ccd" stroke="#333"/><path d="M3 6l2-3 2 1 6-2v3H5" fill="#eee" stroke="#333"/></svg></button>
        <button class="ib" aria-label="Pan"><svg width="17" height="17" viewBox="0 0 17 17"><path d="M6 16l-5-7c0-1.500 1.500-1.500 4 1L3 4c0-1.500 1.500-1.500 2 0l1.500 4L6.500 2c0-1.500 2-1.500 2 0l.5 5.500L10.500 3c.5-1.300 2-1 1.800.5L12 8.500l2-3c.7-1 2-.5 1.500.8L13 13l-1 3z" fill="#fff" stroke="#444"/></svg></button>
        <button class="ib" aria-label="Zoom"><svg width="17" height="17" viewBox="0 0 17 17"><circle cx="6" cy="7" r="4.500" fill="#e4edf8" stroke="#444" stroke-width="1.300"/><path d="M9.500 10.500L14 15" stroke="#222" stroke-width="2.500"/><path d="M12 3.500h5M14.500 1v5M12 7.500h5" stroke="#333"/></svg></button>
        <button class="ib ddw" aria-label="Fit"><svg width="17" height="17" viewBox="0 0 17 17"><circle cx="7" cy="7" r="5.800" fill="#eee" stroke="#444" stroke-width="1.300"/><path d="M4.500 4.500h5v5h-5z" fill="#fff" stroke="#333"/><path d="M11.500 11.500L16 16" stroke="#222" stroke-width="2.500"/></svg><span class="tri tri-sm ms-1"></span></button>
      </div>
      <div class="navb nav2">
        <button class="ib dd" aria-label="Display"><svg width="17" height="17" viewBox="0 0 17 17"><path d="M1 1.500h15v11H1z" fill="#eee" stroke="#222"/><path d="M3 3.500h11v7H3z" fill="#9fc3ec" stroke="#345"/><path d="M6 13h5v2h2v1.500H4V15h2z" fill="#555"/></svg><span class="tri tri-sm ms-1"></span></button>
        <button class="ib dd" aria-label="Grid"><svg width="17" height="17" viewBox="0 0 17 17"><path d="M1 1h15v15H1z" fill="#f3f3f3"/><path d="M.5.5h16v16H.5zM3.500 0v17M6.500 0v17M9.500 0v17M12.500 0v17M0 3.500h17M0 6.500h17M0 9.500h17M0 12.500h17" fill="none" stroke="#777"/></svg><span class="tri tri-sm ms-1"></span></button>
        <button class="ib dd" aria-label="Viewports"><svg width="17" height="17" viewBox="0 0 17 17"><path d="M1 2.500h7v5.500H1zM9 2.500h7v5.500H9zM1 9h7v5.500H1zM9 9h7v5.500H9z" fill="#a5c5ec" stroke="#2b4c80"/></svg><span class="tri tri-sm ms-1"></span></button>
      </div>
    </div>
    <div class="status">1 Profile | Area : 430.422 mm^2</div>
  </div>
</main>

<footer class="timeline d-flex flex-shrink-0">
  <button class="ib play" aria-label="To start"><svg width="13" height="14" viewBox="0 0 13 14" fill="#4a4a4a"><path d="M0 0h2v14H0zM12.500 1v12L3 7z"/></svg></button>
  <button class="ib play" aria-label="Step back"><svg width="14" height="14" viewBox="0 0 14 14" fill="#4a4a4a"><path d="M10 1v12L0 7zM11.500 4H13v6h-1.500z"/></svg></button>
  <button class="ib play" aria-label="Step forward"><svg width="14" height="14" viewBox="0 0 14 14" fill="#4a4a4a"><path d="M3 1v12l10-6zM0 4h1.500v6H0z"/></svg></button>
  <button class="ib play" aria-label="Play"><svg width="13" height="16" viewBox="0 0 13 16" fill="#4a4a4a"><path d="M1 1v14l12-7z"/></svg></button>
  <button class="ib play" aria-label="To end"><svg width="13" height="14" viewBox="0 0 13 14" fill="#4a4a4a"><path d="M10.500 0h2v14h-2zM0 1v12l9.500-6z"/></svg></button>
  <div class="feats d-flex align-items-start">
    <button class="ib" aria-label="Sketch 1"><svg width="18" height="18"><use href="#sk"/></svg></button>
    <button class="ib" aria-label="Extrude 1"><svg width="18" height="18"><use href="#ex"/></svg></button>
    <button class="ib" aria-label="Shell"><svg width="18" height="18" viewBox="0 0 18 18"><path d="M1.500 5.500l4-4h11v10l-4 5h-11z" fill="#f5f6f8" stroke="#333"/><path d="M1.500 5.500h11v11M12.500 5.500l4-4" fill="none" stroke="#333"/><path d="M4 8h6.500v6.500H4z" fill="#a5c5ec" stroke="#16305c"/><path d="M7 8v3.500h3.500" fill="none" stroke="#16305c"/></svg></button>
    <button class="ib on" aria-label="Sketch 2"><svg width="18" height="18"><use href="#sk"/></svg></button>
    <button class="ib" aria-label="Extrude 2"><svg width="18" height="18"><use href="#ex"/></svg></button>
    <button class="ib" aria-label="Mirror"><svg width="18" height="18" viewBox="0 0 18 18" fill="none" stroke="#999"><path d="M2 3l3-1 2 3v7l-2 1-1 3-2 .5zM16 3l-3-1-2 3v7l2 1 1 3 2 .5zM9 1v16M4.500 5v8M13.500 5v8"/></svg></button>
    <svg class="marks pe-none" width="144" height="47" viewBox="0 0 144 47"><path d="M12.500 36v4.500h120V36M36.500 36v4M60.500 36v4M84.500 36v4M108.500 36v4" fill="none" stroke="#666" stroke-width="2"/><path d="M114 10h12v4l-5 5v21h-2V19l-5-5z" fill="#555"/></svg>
  </div>
  <button class="ib gear ms-auto" aria-label="Settings"><svg width="16" height="16" viewBox="0 0 16 16"><circle cx="8" cy="8" r="4.500" fill="none" stroke="#555" stroke-width="2.500"/><circle cx="8" cy="8" r="6.700" fill="none" stroke="#555" stroke-width="2.500" stroke-dasharray="2.600 2.660"/><circle cx="8" cy="8" r="1.300" fill="#555"/></svg></button>
</footer>
</body>
</html>
